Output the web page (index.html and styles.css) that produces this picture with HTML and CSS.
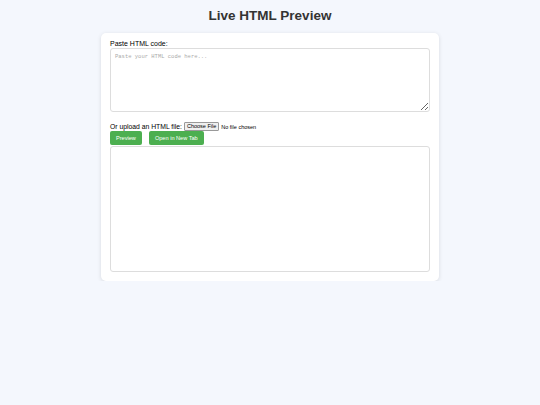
FILE: index.html
```html
<!DOCTYPE html>
<html>
<head>
<meta charset="utf-8">
<link rel="stylesheet" href="styles.css">
</head>
<body>
<h1 class="title">Live HTML Preview</h1>
<div class="card">
  <label class="label" for="code">Paste HTML code:</label>
  <textarea id="code" class="code" placeholder="Paste your HTML code here..."></textarea>
  <div class="upload">
    <span class="upload-label">Or upload an HTML file:</span>
    <span class="file-btn">Choose File</span>
    <span class="file-none">No file chosen</span>
  </div>
  <div class="actions">
    <button class="btn">Preview</button>
    <button class="btn">Open in New Tab</button>
  </div>
  <div class="frame"></div>
</div>
</body>
</html>
```
FILE: styles.css
```css
html, body {
  margin: 0;
  padding: 0;
}
body {
  background: #f4f7fd;
  font-family: "Liberation Sans", Arial, sans-serif;
  color: #333;
  padding-top: 8px;
}
.title {
  margin: 0;
  text-align: center;
  font-size: 13.5px;
  line-height: 16px;
  font-weight: bold;
  color: #333;
}
.card {
  width: 320px;
  margin: 9px auto 0;
  background: #fff;
  border-radius: 5px;
  box-shadow: 0 1px 4px rgba(0,0,0,0.12);
  padding: 7px 9px 9px;
  display: flex;
  flex-direction: column;
}
.label {
  font-size: 7px;
  line-height: 8px;
  color: #000;
}
.code {
  box-sizing: border-box;
  width: 320px;
  height: 64px;
  margin: 0;
  border: 1px solid #ddd;
  border-radius: 3px;
  padding: 4px;
  font-family: "Liberation Mono", monospace;
  font-size: 5.5px;
  resize: vertical;
}
.code::placeholder {
  color: #aaa;
}
.upload {
  display: flex;
  align-items: center;
  margin-top: 10px;
  height: 9px;
}
.upload-label {
  font-size: 6.8px;
  color: #000;
  margin-right: 2px;
}
.file-btn {
  font-size: 5.5px;
  border: 1px solid #999;
  background: #efefef;
  border-radius: 1px;
  padding: 0 2px;
  height: 7px;
  line-height: 7px;
  color: #000;
}
.file-none {
  font-size: 5.5px;
  color: #000;
  margin-left: 2px;
}
.actions {
  display: flex;
  gap: 7px;
  margin-top: 0;
}
.btn {
  background: #4caf50;
  color: #fff;
  border: none;
  border-radius: 2px;
  font-family: "Liberation Sans", Arial, sans-serif;
  font-size: 5.6px;
  height: 14px;
  padding: 0 6px;
}
.frame {
  box-sizing: border-box;
  height: 126px;
  margin-top: 1px;
  border: 1px solid #ddd;
  border-radius: 3px;
  background: #fff;
}
```
